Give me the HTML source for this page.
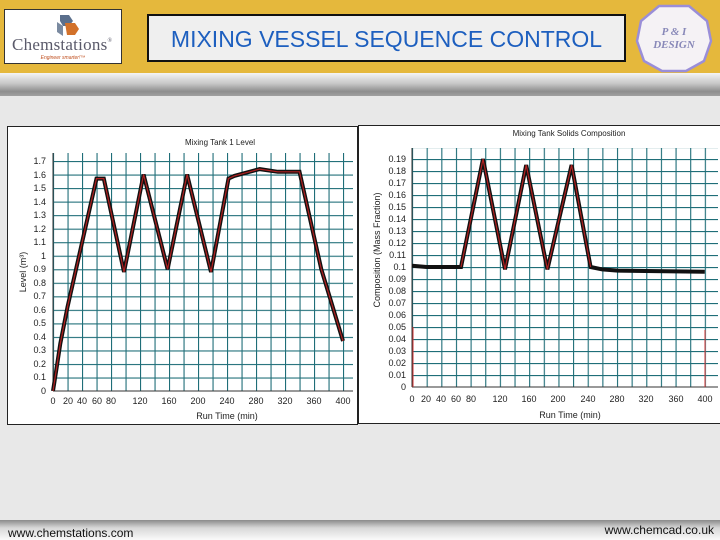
<!DOCTYPE html>
<html><head><meta charset="utf-8"><style>
body{margin:0;width:720px;height:540px;overflow:hidden;background:#e8e8e8;font-family:"Liberation Sans",sans-serif;position:relative}
.gold{position:absolute;left:0;top:0;width:720px;height:73px;background:#e5b83c}
.grad{position:absolute;left:0;top:73px;width:720px;height:23px;background:linear-gradient(#f4f4f4,#c8c8c8 45%,#8e8e8e 80%,#a0a0a0)}
.logo{position:absolute;left:4px;top:9px;width:116px;height:53px;background:#fff;border:1px solid #333}
.title{position:absolute;left:147px;top:14px;width:475px;height:44px;background:#efefef;border:2px solid #111;color:#1d5fbf;font-size:23px;line-height:46px;text-align:center}
.foot{position:absolute;left:0;top:520px;width:720px;height:20px;background:linear-gradient(#8a8a8a,#d8d8d8 40%,#fafafa)}
.f1{position:absolute;left:8px;top:526px;font-size:12px;color:#111}
.f2{position:absolute;right:6px;top:523px;font-size:12px;color:#111}
.s{font-family:"Liberation Sans",sans-serif}
.r{font-family:"Liberation Serif",serif}
</style></head><body>
<div class="gold"></div><div class="grad"></div>
<div class="logo">
<svg width="116" height="53">
<polygon points="55,5 64,5 68,11 64,16 58,16 55,11" fill="#5a6f8c"/>
<polygon points="60,13 70,13 74,19 70,25 62,25" fill="#d2712a"/>
<polygon points="52,12 58,16 58,26 52,22" fill="#7a8aa0"/>
<text class="r" x="57" y="40" text-anchor="middle" font-size="17" fill="#5a5a6a" textLength="100">Chemstations<tspan font-size="6" dy="-8">&#174;</tspan></text>
<text class="s" x="58" y="49" text-anchor="middle" font-size="5" font-style="italic" fill="#c05020">Engineer smarter!™</text>
</svg></div>
<div class="title">MIXING VESSEL SEQUENCE CONTROL</div>
<svg style="position:absolute;left:634px;top:3px" width="80" height="70">
<polygon points="25,3 55,3 73,18 77,38 70,58 52,68 28,68 10,58 3,38 7,18" fill="#f5f2f5" stroke="#9a8ed8" stroke-width="2.5"/>
<text class="r" x="40" y="32" text-anchor="middle" font-style="italic" font-weight="bold" font-size="11" fill="#8888b8">P &amp; I</text>
<text class="r" x="40" y="45" text-anchor="middle" font-style="italic" font-weight="bold" font-size="11" fill="#8888b8">DESIGN</text>
</svg>
<svg class="s" style="position:absolute;left:0;top:0" width="720" height="540">
<defs>
<pattern id="gl" patternUnits="userSpaceOnUse" x="53" y="161" width="14.5" height="13.53"><path d="M0.5 0V13.53M0 0.5H14.5" stroke="#1f6e78" stroke-width="1.2" fill="none"/></pattern>
<pattern id="gr" patternUnits="userSpaceOnUse" x="412" y="159" width="14.64" height="12"><path d="M0.5 0V12M0 0.5H14.64" stroke="#1f6e78" stroke-width="1.2" fill="none"/></pattern>
</defs>
<rect x="7.5" y="126.5" width="350" height="298" fill="#fff" stroke="#222"/>
<rect x="358.5" y="125.5" width="362" height="298" fill="#fff" stroke="#222"/>
<rect x="53" y="153" width="300" height="238" fill="url(#gl)"/>
<line x1="53" y1="391" x2="353" y2="391" stroke="#333"/><line x1="53" y1="153" x2="53" y2="391" stroke="#333"/>
<rect x="412" y="148" width="306" height="239" fill="url(#gr)"/>
<line x1="412" y1="387" x2="718" y2="387" stroke="#333"/><line x1="412" y1="148" x2="412" y2="387" stroke="#333"/>
<polyline points="53,391 56.6,368 60.3,343.6 67.5,307 96.5,178.6 103.8,178.6 124,272 143.6,174.5 167.6,269.2 187.1,174.5 211,272 228.5,178.6 234.3,175.9 259.6,169.1 277.8,171.8 299.5,171.8 321.3,269.2 343,341" fill="none" stroke="#111" stroke-width="4"/>
<polyline points="53,391 56.6,368 60.3,343.6 67.5,307 96.5,178.6 103.8,178.6 124,272 143.6,174.5 167.6,269.2 187.1,174.5 211,272 228.5,178.6 234.3,175.9 259.6,169.1 277.8,171.8 299.5,171.8 321.3,269.2 343,341" fill="none" stroke="#b02020" stroke-width="1.2"/>
<line x1="413" y1="387" x2="413" y2="327" stroke="#d03030"/><line x1="705" y1="387" x2="705" y2="330" stroke="#d03030"/>
<polyline points="412,265.8 426.6,267 461,267 483,159 505,269.4 526.2,165 547.4,269.4 571.6,165 590.6,267 602.3,269.4 617.7,270.6 704.8,271.8" fill="none" stroke="#111" stroke-width="4"/>
<polyline points="461,267 483,159 505,269.4 526.2,165 547.4,269.4 571.6,165 590.6,267" fill="none" stroke="#b02020" stroke-width="1.2"/>
<g font-size="8" fill="#222">
<text x="220" y="145" text-anchor="middle">Mixing Tank 1 Level</text>
<text x="569" y="136" text-anchor="middle">Mixing Tank Solids Composition</text>
</g>
<g font-size="9" fill="#222" text-anchor="end">
<text x="46" y="394">0</text><text x="46" y="380">0.1</text><text x="46" y="367">0.2</text><text x="46" y="353">0.3</text><text x="46" y="340">0.4</text><text x="46" y="326">0.5</text><text x="46" y="313">0.6</text><text x="46" y="299">0.7</text><text x="46" y="286">0.8</text><text x="46" y="272">0.9</text><text x="46" y="259">1</text><text x="46" y="245">1.1</text><text x="46" y="232">1.2</text><text x="46" y="218">1.3</text><text x="46" y="205">1.4</text><text x="46" y="191">1.5</text><text x="46" y="178">1.6</text><text x="46" y="164">1.7</text>
<text x="406" y="390">0</text><text x="406" y="378">0.01</text><text x="406" y="366">0.02</text><text x="406" y="354">0.03</text><text x="406" y="342">0.04</text><text x="406" y="330">0.05</text><text x="406" y="318">0.06</text><text x="406" y="306">0.07</text><text x="406" y="294">0.08</text><text x="406" y="282">0.09</text><text x="406" y="270">0.1</text><text x="406" y="258">0.11</text><text x="406" y="246">0.12</text><text x="406" y="234">0.13</text><text x="406" y="222">0.14</text><text x="406" y="210">0.15</text><text x="406" y="198">0.16</text><text x="406" y="186">0.17</text><text x="406" y="174">0.18</text><text x="406" y="162">0.19</text>
</g>
<g font-size="9" fill="#222" text-anchor="middle">
<text x="53" y="404">0</text><text x="68" y="404">20</text><text x="82" y="404">40</text><text x="97" y="404">60</text><text x="111" y="404">80</text><text x="140" y="404">120</text><text x="169" y="404">160</text><text x="198" y="404">200</text><text x="227" y="404">240</text><text x="256" y="404">280</text><text x="285" y="404">320</text><text x="314" y="404">360</text><text x="343" y="404">400</text>
<text x="227" y="419">Run Time (min)</text>
<text x="412" y="402">0</text><text x="426" y="402">20</text><text x="441" y="402">40</text><text x="456" y="402">60</text><text x="471" y="402">80</text><text x="500" y="402">120</text><text x="529" y="402">160</text><text x="558" y="402">200</text><text x="588" y="402">240</text><text x="617" y="402">280</text><text x="646" y="402">320</text><text x="676" y="402">360</text><text x="705" y="402">400</text>
<text x="570" y="418">Run Time (min)</text>
<text transform="translate(26,272) rotate(-90)">Level (m³)</text>
<text transform="translate(380,250) rotate(-90)">Composition (Mass Fraction)</text>
</g>
</svg>
<div class="foot"></div>
<div class="f1">www.chemstations.com</div>
<div class="f2">www.chemcad.co.uk</div>
</body></html>
